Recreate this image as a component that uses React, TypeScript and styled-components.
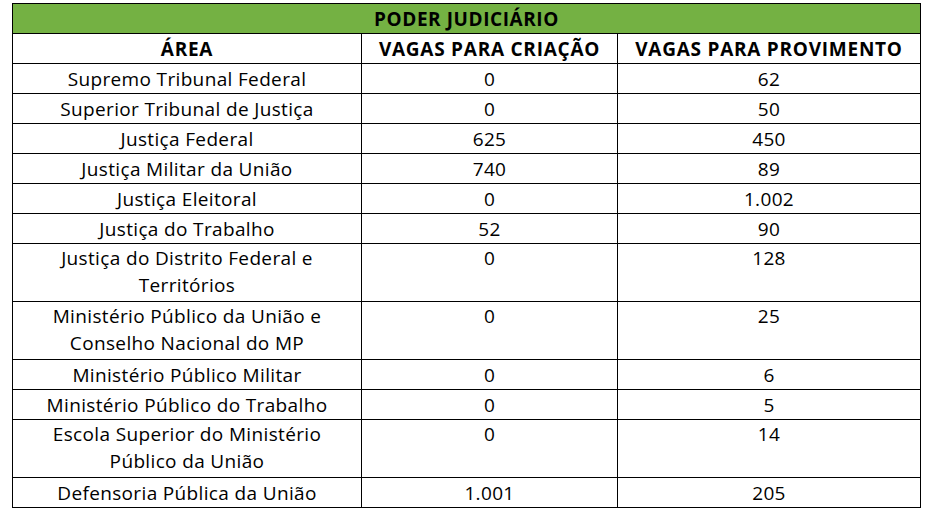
import React from "react";
import styled, { createGlobalStyle } from "styled-components";

const Global = createGlobalStyle`
  html, body {
    margin: 0;
    padding: 0;
    background: #ffffff;
  }
  body {
    font-family: "Open Sans", Lato, sans-serif;
    color: #000;
  }
`;

const Page = styled.div`
  padding: 3px 0 0 12px;
`;

const Table = styled.div`
  display: grid;
  grid-template-columns: 349px 256px 303px;
  width: 909px;
  border-left: 1px solid #000;
  border-top: 1px solid #000;
  box-sizing: border-box;
`;

const Banner = styled.div`
  grid-column: 1 / -1;
  height: 30px;
  box-sizing: border-box;
  border-right: 1px solid #000;
  border-bottom: 1px solid #000;
  background: #74b143;
  text-align: center;
  font-weight: 700;
  font-size: 19px;
  letter-spacing: 0.57px;
  line-height: 28px;
  padding-top: 1px;
  color: #000;
`;

const Cell = styled.div<{ $bold?: boolean; $tall?: boolean }>`
  height: ${(p) => (p.$tall ? 58 : 30)}px;
  box-sizing: border-box;
  border-right: 1px solid #000;
  border-bottom: 1px solid #000;
  text-align: center;
  font-size: 19px;
  letter-spacing: ${(p) => (p.$bold ? 0.75 : 0.35)}px;
  line-height: ${(p) => (p.$tall ? 27 : 28)}px;
  padding-top: 1px;
  font-weight: ${(p) => (p.$bold ? 700 : 400)};
  white-space: nowrap;
  color: #000;
`;

type Row = { area: string[]; criacao: string; provimento: string };

const rows: Row[] = [
  { area: ["Supremo Tribunal Federal"], criacao: "0", provimento: "62" },
  { area: ["Superior Tribunal de Justiça"], criacao: "0", provimento: "50" },
  { area: ["Justiça Federal"], criacao: "625", provimento: "450" },
  { area: ["Justiça Militar da União"], criacao: "740", provimento: "89" },
  { area: ["Justiça Eleitoral"], criacao: "0", provimento: "1.002" },
  { area: ["Justiça do Trabalho"], criacao: "52", provimento: "90" },
  { area: ["Justiça do Distrito Federal e", "Territórios"], criacao: "0", provimento: "128" },
  { area: ["Ministério Público da União e", "Conselho Nacional do MP"], criacao: "0", provimento: "25" },
  { area: ["Ministério Público Militar"], criacao: "0", provimento: "6" },
  { area: ["Ministério Público do Trabalho"], criacao: "0", provimento: "5" },
  { area: ["Escola Superior do Ministério", "Público da União"], criacao: "0", provimento: "14" },
  { area: ["Defensoria Pública da União"], criacao: "1.001", provimento: "205" },
];

export default function App() {
  return (
    <>
      <Global />
      <Page>
        <Table>
          <Banner>PODER JUDICIÁRIO</Banner>
          <Cell $bold>ÁREA</Cell>
          <Cell $bold>VAGAS PARA CRIAÇÃO</Cell>
          <Cell $bold>VAGAS PARA PROVIMENTO</Cell>
          {rows.map((r, i) => {
            const tall = r.area.length > 1;
            return (
              <React.Fragment key={i}>
                <Cell $tall={tall}>
                  {r.area.map((line, j) => (
                    <React.Fragment key={j}>
                      {j > 0 && <br />}
                      {line}
                    </React.Fragment>
                  ))}
                </Cell>
                <Cell $tall={tall}>{r.criacao}</Cell>
                <Cell $tall={tall}>{r.provimento}</Cell>
              </React.Fragment>
            );
          })}
        </Table>
      </Page>
    </>
  );
}
